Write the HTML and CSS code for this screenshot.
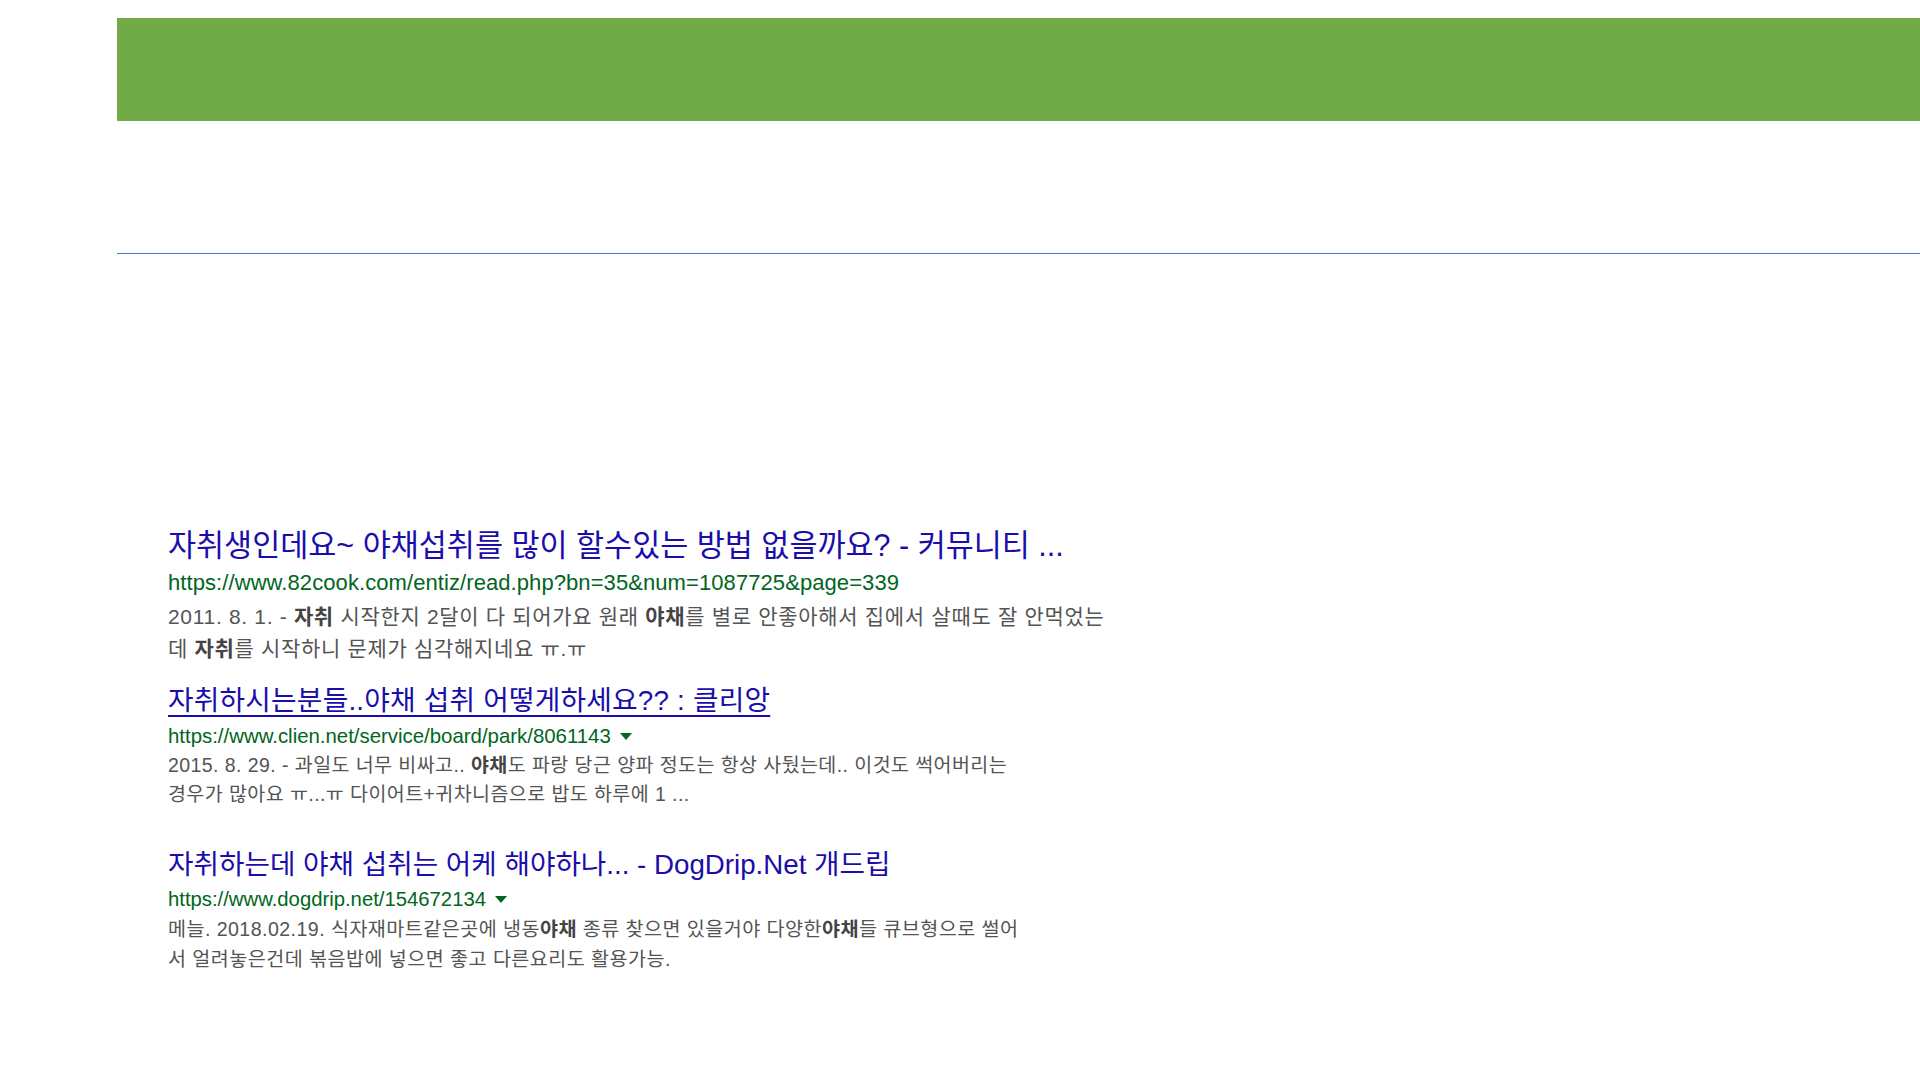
FILE: index.html
```html
<!DOCTYPE html>
<html lang="ko">
<head>
<meta charset="utf-8">
<title>검색 결과</title>
<link rel="stylesheet" href="styles.css">
</head>
<body>
<div class="banner"></div>
<div class="rule"></div>
<div class="results">
  <div class="result r1">
    <a class="title" href="#">자취생인데요~ 야채섭취를 많이 할수있는 방법 없을까요? - 커뮤니티 ...</a>
    <div class="url">https://www.82cook.com/entiz/read.php?bn=35&amp;num=1087725&amp;page=339</div>
    <div class="snippet">2011. 8. 1. - <b>자취</b> 시작한지 2달이 다 되어가요 원래 <b>야채</b>를 별로 안좋아해서 집에서 살때도 잘 안먹었는<br>데 <b>자취</b>를 시작하니 문제가 심각해지네요 ㅠ.ㅠ</div>
  </div>
  <div class="result r2">
    <a class="title" href="#">자취하시는분들..야채 섭취 어떻게하세요?? : 클리앙</a>
    <div class="url">https://www.clien.net/service/board/park/8061143<span class="caret"></span></div>
    <div class="snippet">2015. 8. 29. - 과일도 너무 비싸고.. <b>야채</b>도 파랑 당근 양파 정도는 항상 사뒀는데.. 이것도 썩어버리는<br>경우가 많아요 ㅠ...ㅠ 다이어트+귀차니즘으로 밥도 하루에 1 ...</div>
  </div>
  <div class="result r3">
    <a class="title" href="#">자취하는데 야채 섭취는 어케 해야하나... - DogDrip.Net 개드립</a>
    <div class="url">https://www.dogdrip.net/154672134<span class="caret"></span></div>
    <div class="snippet">메늘. 2018.02.19. 식자재마트같은곳에 냉동<b>야채</b> 종류 찾으면 있을거야 다양한<b>야채</b>들 큐브형으로 썰어<br>서 얼려놓은건데 볶음밥에 넣으면 좋고 다른요리도 활용가능.</div>
  </div>
</div>
</body>
</html>
```
FILE: styles.css
```css
html, body {
  margin: 0;
  padding: 0;
  background: #ffffff;
}
body {
  font-family: "Liberation Sans", Arial, "Noto Sans CJK KR", sans-serif;
  width: 1920px;
  overflow: hidden;
}
.banner {
  margin-left: 117px;
  margin-top: 18px;
  height: 103px;
  background: #70ab48;
}
.rule {
  margin-left: 117px;
  margin-top: 132px;
  height: 0;
  border-top: 1.5px solid #3a78d0;
}
.results {
  padding-left: 168px;
  padding-top: 273px;
  display: flex;
  flex-direction: column;
}
.result {
  display: flex;
  flex-direction: column;
}
.title {
  color: #1a0dab;
  text-decoration: none;
  white-space: nowrap;
}
.url {
  color: #006621;
  white-space: nowrap;
  display: flex;
  align-items: center;
}
.snippet {
  color: #545454;
  white-space: nowrap;
}
.snippet b {
  color: #444444;
}
.caret {
  display: inline-block;
  width: 0;
  height: 0;
  margin-left: 9px;
  border-left: 6px solid transparent;
  border-right: 6px solid transparent;
  border-top: 7px solid #006621;
}
.r1 .title { font-size: 30.5px; line-height: 36px; }
.r1 .url { font-size: 22px; line-height: 36px; margin-top: 2px; letter-spacing: 0.08px; }
.r1 .snippet { font-size: 21px; line-height: 32px; letter-spacing: 0.68px; }

.r2 { margin-top: 19px; }
.r2 .title { font-size: 27.8px; line-height: 34px; letter-spacing: 0.2px; text-decoration: underline; text-decoration-thickness: 2px; text-underline-offset: 5px; }
.r2 .url { font-size: 20.4px; line-height: 30px; margin-top: 3px; }
.r2 .snippet { font-size: 19.5px; line-height: 29px; letter-spacing: 0.43px; }

.r3 { margin-top: 39px; }
.r3 .title { font-size: 27.7px; line-height: 34px; }
.r3 .url { font-size: 20.3px; line-height: 30px; margin-top: 2px; }
.r3 .snippet { font-size: 19.6px; line-height: 30px; letter-spacing: 0.44px; }
```
